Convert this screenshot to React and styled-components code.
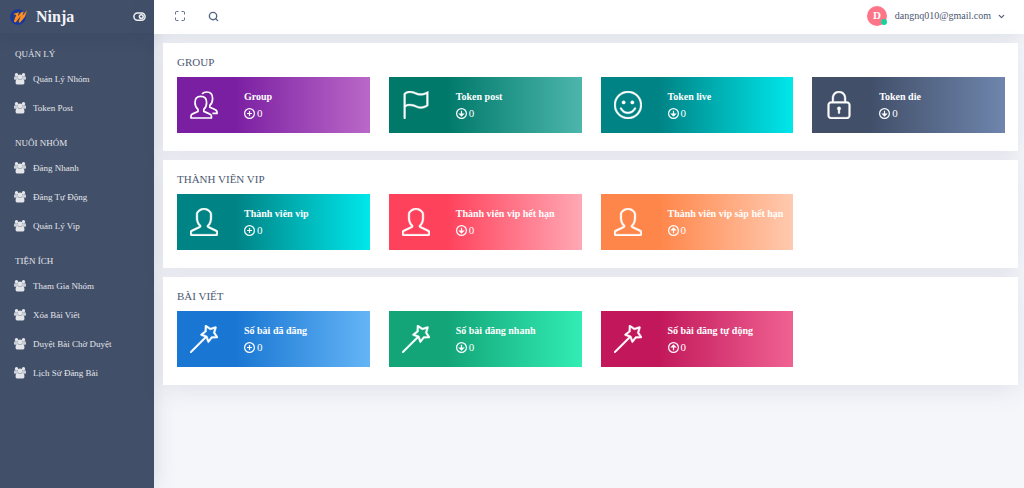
import React from "react";
import styled, { createGlobalStyle } from "styled-components";
import { SlFlag, SlEmotsmile, SlLock, SlUser, SlMagicWand } from "react-icons/sl";
import { FiMaximize, FiSearch, FiChevronDown } from "react-icons/fi";

const GlobalStyle = createGlobalStyle`
  * { box-sizing: border-box; }
  body {
    margin: 0;
    background: #f5f6fa;
    color: #4b5872;
    font-family: "Liberation Serif", "Times New Roman", serif;
  }
  h1, h2, h3, p, ul { margin: 0; padding: 0; font-weight: 400; }
  button { border: 0; padding: 0; background: none; color: inherit; font: inherit; cursor: pointer; display: flex; align-items: center; }
  a { color: inherit; text-decoration: none; }
`;

const Shell = styled.div`
  display: grid;
  grid-template-columns: 154px minmax(0, 1fr);
  min-height: 100vh;
`;

const Sidebar = styled.aside`
  background: #414f69;
  color: #e4e6ea;
  box-shadow: 1px 0 20px rgba(65, 79, 105, 0.16);
`;

const Brand = styled.div`
  display: flex;
  align-items: center;
  height: 33px;
  padding: 0 8px 0 10px;
  box-shadow: 0 4px 16px rgba(30, 40, 60, 0.12);
`;

const BrandLink = styled.a`
  display: flex;
  flex: 1;
  align-items: center;
  gap: 8px;
`;

const BrandName = styled.h1`
  && { font-weight: 700; }
  font-size: 16px;
  line-height: 20px;
  color: #f1f3f6;
`;

const NavHeading = styled.h2`
  height: 31px;
  padding: 11px 15px 0;
  font-size: 9px;
  line-height: 20px;
`;

const NavList = styled.ul`
  list-style: none;
`;

const NavLink = styled.a`
  display: flex;
  align-items: center;
  gap: 7px;
  height: 29px;
  padding: 0 14px;
  font-size: 9px;
  line-height: 20px;
  white-space: nowrap;
`;

const Main = styled.div`
  display: flex;
  flex-direction: column;
`;

const Topbar = styled.header`
  display: flex;
  align-items: center;
  justify-content: space-between;
  height: 34px;
  padding: 0 18px 2px 20px;
  background: #fff;
  box-shadow: 0 2px 24px rgba(65, 79, 105, 0.14);
`;

const Tools = styled.div`
  display: flex;
  gap: 22px;
  color: #4f6684;
`;

const UserButton = styled.button`
  && { font-size: 10px; }
  line-height: 16px;
`;

const Avatar = styled.span`
  position: relative;
  width: 20px;
  height: 20px;
  margin-right: 8px;
  border-radius: 50%;
  background: #ff7588;
  color: #fff;
  font-size: 11px;
  font-weight: 700;
  line-height: 19px;
  text-align: center;
`;

const Status = styled.i`
  position: absolute;
  right: 0;
  bottom: 1px;
  width: 6px;
  height: 6px;
  border-radius: 50%;
  background: #16d39a;
`;

const Chevron = styled(FiChevronDown)`
  margin-left: 6px;
`;

const Content = styled.main`
  display: flex;
  flex-direction: column;
  gap: 9px;
  padding: 9px 6px 24px 9px;
`;

const Panel = styled.section`
  padding: 10px 13px 18px 14px;
  background: #fff;
  box-shadow: 0 6px 22px rgba(65, 70, 105, 0.1);
`;

const PanelTitle = styled.h2`
  margin-bottom: 6px;
  font-size: 11px;
  line-height: 18px;
`;

const Tiles = styled.div`
  display: grid;
  grid-template-columns: repeat(4, minmax(0, 1fr));
  gap: 19px;
`;

const Tile = styled.article`
  display: flex;
  align-items: center;
  height: 56px;
  padding: 0 13px;
  gap: 26px;
  color: #fff;
  background: linear-gradient(90deg, ${(p) => p.$from} 30%, ${(p) => p.$to} 100%);
  > svg { flex: none; }
`;

const TileText = styled.div`
  white-space: nowrap;
`;

const TileTitle = styled.h3`
  && { font-weight: 700; }
  font-size: 10px;
  line-height: 16px;
`;

const TileValue = styled.p`
  display: flex;
  align-items: center;
  gap: 2px;
  font-size: 11px;
  line-height: 16px;
`;

const Logo = () => (
  <svg width="18" height="18" viewBox="0 0 18 18" aria-hidden="true">
    <circle cx="8" cy="9" r="6.8" fill="#263f78" stroke="#1436a6" strokeWidth="2" />
    <path d="M3.2 5.9 9 4.2 7.6 8.6 11.6 4 13.8 3.8 12.4 7.8 17 2.4 14.8 8.9 9.9 14.8 8.6 13.9 10.6 8 5.6 14.4 3.8 13.6 6.2 6.9Z" fill="#ff8d1f" />
  </svg>
);

const ToggleIcon = () => (
  <svg width="13" height="13" viewBox="0 0 13 13" fill="none" stroke="#f1f3f6" strokeWidth="1.5" aria-hidden="true">
    <rect x=".9" y="3" width="11.2" height="7.2" rx="3.6" />
    <circle cx="8.3" cy="6.6" r="1.9" />
  </svg>
);

const GroupIcon = () => (
  <svg width="12" height="12" viewBox="0 0 12 12" fill="currentColor" aria-hidden="true">
    <circle cx="2.5" cy="1.8" r="1.7" />
    <circle cx="9.5" cy="1.8" r="1.7" />
    <path d="M0 6V4.6Q0 3.2 1.2 3.2H3.8L4 6.4 2.4 6.8H.8Q0 6.8 0 6ZM12 6V4.6Q12 3.2 10.8 3.2H8.2L8 6.4 9.6 6.8H11.2Q12 6.8 12 6Z" opacity=".85" />
    <circle cx="6" cy="4" r="2.4" />
    <path d="M1.6 10V9Q1.6 6.1 3.9 6Q6 7.1 8.1 6Q10.4 6.1 10.4 9V10Q10.4 11.4 9 11.4H3Q1.6 11.4 1.6 10Z" />
  </svg>
);

const UsersIcon = ({ size }) => (
  <svg width={size} height={size} viewBox="0 0 28 28" fill="none" stroke="currentColor" strokeWidth="1.7" strokeLinejoin="round" aria-hidden="true">
    <path d="M1 27V25Q1 23.6 2.6 22.9L8 20.4V18.4Q5 15.8 5 11.4Q5 5.4 10.8 5.4T16.6 11.4Q16.6 15.8 13.8 18.4V20.4L19.4 22.9Q21.4 23.6 21.4 25V27Z" />
    <path d="M12 2.8Q13.8 1 16.6 1Q22.6 1 22.6 7.4Q22.6 12 19.8 14.4V16.2L25 18.6Q27 19.4 27 21V22.4H22.4" />
  </svg>
);

const marks = {
  plus: "M5.5 3V8M3 5.5H8",
  down: "M5.5 2.8V7.6M3.7 6 5.5 7.8 7.3 6Z",
  up: "M5.5 8.2V3.4M3.7 5 5.5 3.2 7.3 5Z",
};

const CircleMark = ({ kind }) => (
  <svg width="11" height="11" viewBox="0 0 11 11" fill="none" stroke="#fff" strokeWidth="1.2" aria-hidden="true">
    <circle cx="5.5" cy="5.5" r="4.9" />
    <path d={marks[kind]} />
  </svg>
);

const nav = [
  { title: "QUẢN LÝ", items: ["Quản Lý Nhóm", "Token Post"] },
  { title: "NUÔI NHÓM", items: ["Đăng Nhanh", "Đăng Tự Động", "Quản Lý Vip"] },
  { title: "TIỆN ÍCH", items: ["Tham Gia Nhóm", "Xóa Bài Viết", "Duyệt Bài Chờ Duyệt", "Lịch Sử Đăng Bài"] },
];

const panels = [
  {
    title: "GROUP",
    tiles: [
      { label: "Group", Icon: UsersIcon, mark: "plus", from: "#7b1fa2", to: "#ba68c8" },
      { label: "Token post", Icon: SlFlag, mark: "down", from: "#00796b", to: "#4db6ac" },
      { label: "Token live", Icon: SlEmotsmile, mark: "down", from: "#008385", to: "#00e7eb" },
      { label: "Token die", Icon: SlLock, mark: "down", from: "#414f69", to: "#6f85ad" },
    ],
  },
  {
    title: "THÀNH VIÊN VIP",
    tiles: [
      { label: "Thành viên vip", Icon: SlUser, mark: "plus", from: "#008385", to: "#00e7eb" },
      { label: "Thành viên vip hết hạn", Icon: SlUser, mark: "down", from: "#ff425c", to: "#ffa8b4" },
      { label: "Thành viên vip sắp hết hạn", Icon: SlUser, mark: "up", from: "#ff864a", to: "#ffcab0" },
    ],
  },
  {
    title: "BÀI VIẾT",
    tiles: [
      { label: "Số bài đã đăng", Icon: SlMagicWand, mark: "plus", from: "#1976d2", to: "#64b5f6" },
      { label: "Số bài đăng nhanh", Icon: SlMagicWand, mark: "down", from: "#13a578", to: "#32edb4" },
      { label: "Số bài đăng tự động", Icon: SlMagicWand, mark: "up", from: "#c2185b", to: "#f06292" },
    ],
  },
];

export default function App() {
  return (
    <>
      <GlobalStyle />
      <Shell>
        <Sidebar>
          <Brand>
            <BrandLink href="#home">
              <Logo />
              <BrandName>Ninja</BrandName>
            </BrandLink>
            <button type="button" aria-label="Toggle menu"><ToggleIcon /></button>
          </Brand>
          <nav>
            {nav.map((group) => (
              <div key={group.title}>
                <NavHeading>{group.title}</NavHeading>
                <NavList>
                  {group.items.map((item) => (
                    <li key={item}>
                      <NavLink href="#page"><GroupIcon />{item}</NavLink>
                    </li>
                  ))}
                </NavList>
              </div>
            ))}
          </nav>
        </Sidebar>
        <Main>
          <Topbar>
            <Tools>
              <button type="button" aria-label="Fullscreen"><FiMaximize size={12} strokeWidth={2} /></button>
              <button type="button" aria-label="Search"><FiSearch size={11} strokeWidth={3} /></button>
            </Tools>
            <UserButton type="button">
              <Avatar>D<Status /></Avatar>
              dangnq010@gmail.com
              <Chevron size={9} strokeWidth={3} />
            </UserButton>
          </Topbar>
          <Content>
            {panels.map((panel) => (
              <Panel key={panel.title}>
                <PanelTitle>{panel.title}</PanelTitle>
                <Tiles>
                  {panel.tiles.map(({ label, Icon, mark, from, to }) => (
                    <Tile key={label} $from={from} $to={to}>
                      <Icon size={28} strokeWidth={Icon === UsersIcon ? undefined : 14} />
                      <TileText>
                        <TileTitle>{label}</TileTitle>
                        <TileValue><CircleMark kind={mark} />0</TileValue>
                      </TileText>
                    </Tile>
                  ))}
                </Tiles>
              </Panel>
            ))}
          </Content>
        </Main>
      </Shell>
    </>
  );
}
